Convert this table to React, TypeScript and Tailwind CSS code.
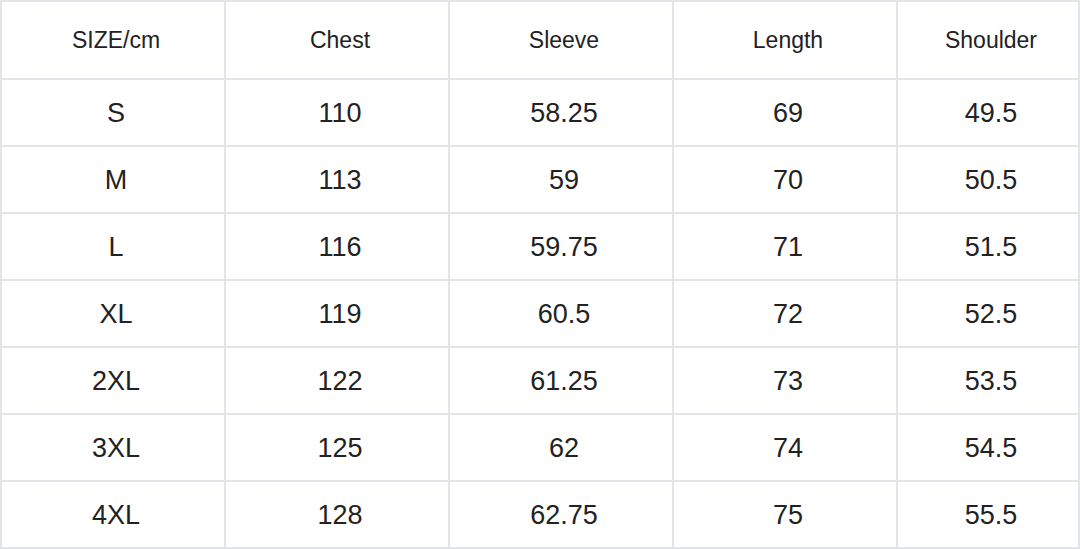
import React from "react";

const headers = ["SIZE/cm", "Chest", "Sleeve", "Length", "Shoulder"];
const rows = [
  ["S", "110", "58.25", "69", "49.5"],
  ["M", "113", "59", "70", "50.5"],
  ["L", "116", "59.75", "71", "51.5"],
  ["XL", "119", "60.5", "72", "52.5"],
  ["2XL", "122", "61.25", "73", "53.5"],
  ["3XL", "125", "62", "74", "54.5"],
  ["4XL", "128", "62.75", "75", "55.5"],
];

export default function App() {
  return (
    <div
      className="w-[1080px] h-[549px] bg-[#e3e3ea] p-[2px] grid grid-cols-[222px_222px_222px_222px_180px] grid-rows-[76px_repeat(7,65px)] gap-[2px] text-[#222222]"
      style={{ fontFamily: '"Liberation Sans", Arial, sans-serif' }}
    >
      {headers.map((h) => (
        <div key={h} className="bg-white flex items-center justify-center pl-[6px] text-[23px]">
          {h}
        </div>
      ))}
      {rows.map((r, i) =>
        r.map((c, j) => (
          <div key={`${i}-${j}`} className="bg-white flex items-center justify-center pl-[6px] pt-[1px] text-[27px]">
            {c}
          </div>
        ))
      )}
    </div>
  );
}
